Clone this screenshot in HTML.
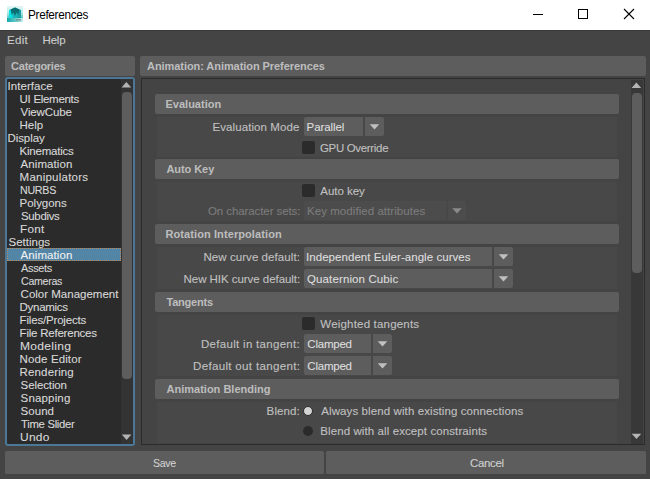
<!DOCTYPE html>
<html><head><meta charset="utf-8"><style>
*{box-sizing:border-box;margin:0;padding:0}
html,body{width:650px;height:479px;overflow:hidden;background:#444444;font-family:"Liberation Sans",sans-serif;font-size:11px;color:#bbbbbb}
.a{position:absolute}
.t{position:absolute;white-space:nowrap;-webkit-text-stroke:0.1px currentColor}
.b{-webkit-text-stroke:0}
</style></head><body>
<div class="a" style="left:0px;top:0px;width:650px;height:30px;background:#ffffff;"></div>
<div class="a" style="left:0px;top:30px;width:650px;height:1px;background:#3a3a3a;"></div>
<svg class="a" style="left:7px;top:6px" width="16" height="16" viewBox="0 0 16 16">
<defs><linearGradient id="ig" x1="0" y1="0" x2="0" y2="1"><stop offset="0" stop-color="#e4f6f6"/><stop offset="0.4" stop-color="#b8e9e9"/><stop offset="0.8" stop-color="#4ec4c4"/><stop offset="1" stop-color="#1fb0b0"/></linearGradient>
<linearGradient id="ib" x1="0" y1="0" x2="1" y2="0"><stop offset="0" stop-color="#13a9ab"/><stop offset="0.6" stop-color="#6ccccc"/><stop offset="1" stop-color="#c9eded"/></linearGradient></defs>
<rect x="0" y="0" width="16" height="16" fill="url(#ig)"/>
<rect x="0" y="12" width="16" height="4" fill="url(#ib)"/>
<path d="M2 12 L2 4.3 L8 1.6 L14 4.3 L14 12 Z" fill="#1db3b6"/>
<path d="M2 4.3 L5.2 3 L5.6 12 L2 12 Z" fill="#08e2e2"/>
<path d="M10.8 3 L14 4.3 L14 12 L10.6 12 Z" fill="#1a9ea2"/>
<path d="M3.6 3.6 L8 1.6 L12.4 3.6 L11.2 9 L9.6 6.2 L8 10 L6.4 6.2 L4.8 9 Z" fill="#0b6c72"/>
<rect x="9" y="13.2" width="5" height="1.3" fill="#6f8384" opacity="0.8"/>
</svg>
<div class="t b" style="left:27.60px;top:6.84px;font-size:12px;line-height:16px;font-weight:normal;letter-spacing:-0.300px;color:#000000;transform:scaleX(0.9787);transform-origin:0 0;">Preferences</div>
<div class="a" style="left:533px;top:14px;width:10px;height:1px;background:#000;"></div>
<div class="a" style="left:578px;top:9px;width:10px;height:10px;background:transparent;border:1px solid #000"></div>
<svg class="a" style="left:623px;top:8px" width="12" height="12" viewBox="0 0 12 12"><path d="M1 1 L11 11 M11 1 L1 11" stroke="#000" stroke-width="1.1"/></svg>
<div class="t" style="left:7.00px;top:32.52px;font-size:11.5px;line-height:15px;font-weight:normal;letter-spacing:0.300px;color:#cccccc;transform:scaleX(1.0050);transform-origin:0 0;">Edit</div>
<div class="t" style="left:42.50px;top:32.52px;font-size:11.5px;line-height:15px;font-weight:normal;letter-spacing:-0.167px;color:#cccccc;">Help</div>
<div class="a" style="left:5px;top:56px;width:130px;height:20px;background:#5d5d5d;border-radius:2px"></div>
<div class="t b" style="left:11.10px;top:59.19px;font-size:11px;line-height:14px;font-weight:bold;letter-spacing:-0.256px;color:#bdbdbd;">Categories</div>
<div class="a" style="left:140px;top:56px;width:506px;height:20px;background:#5d5d5d;border-radius:2px"></div>
<div class="t b" style="left:147.00px;top:59.19px;font-size:11px;line-height:14px;font-weight:bold;letter-spacing:-0.065px;color:#bdbdbd;">Animation: Animation Preferences</div>
<div class="a" style="left:5px;top:77px;width:130px;height:369px;background:#2b2b2b;border:2px solid #4b7896;border-radius:3px"></div>
<div class="t" style="left:7.50px;top:78.52px;font-size:11.5px;line-height:15px;font-weight:normal;letter-spacing:0.050px;color:#d8d8d8;">Interface</div>
<div class="t" style="left:19.60px;top:91.52px;font-size:11.5px;line-height:15px;font-weight:normal;letter-spacing:-0.300px;color:#d8d8d8;">UI Elements</div>
<div class="t" style="left:20.60px;top:104.52px;font-size:11.5px;line-height:15px;font-weight:normal;letter-spacing:-0.129px;color:#d8d8d8;">ViewCube</div>
<div class="t" style="left:19.60px;top:117.52px;font-size:11.5px;line-height:15px;font-weight:normal;letter-spacing:-0.033px;color:#d8d8d8;">Help</div>
<div class="t" style="left:7.50px;top:130.52px;font-size:11.5px;line-height:15px;font-weight:normal;letter-spacing:-0.083px;color:#d8d8d8;">Display</div>
<div class="t" style="left:19.60px;top:143.52px;font-size:11.5px;line-height:15px;font-weight:normal;letter-spacing:-0.233px;color:#d8d8d8;">Kinematics</div>
<div class="t" style="left:20.60px;top:156.52px;font-size:11.5px;line-height:15px;font-weight:normal;letter-spacing:0.075px;color:#d8d8d8;">Animation</div>
<div class="t" style="left:19.60px;top:169.52px;font-size:11.5px;line-height:15px;font-weight:normal;letter-spacing:0.236px;color:#d8d8d8;">Manipulators</div>
<div class="t" style="left:19.60px;top:182.52px;font-size:11.5px;line-height:15px;font-weight:normal;letter-spacing:-0.300px;color:#d8d8d8;transform:scaleX(0.9286);transform-origin:0 0;">NURBS</div>
<div class="t" style="left:19.60px;top:195.52px;font-size:11.5px;line-height:15px;font-weight:normal;letter-spacing:-0.029px;color:#d8d8d8;">Polygons</div>
<div class="t" style="left:20.60px;top:208.52px;font-size:11.5px;line-height:15px;font-weight:normal;letter-spacing:-0.300px;color:#d8d8d8;transform:scaleX(0.9923);transform-origin:0 0;">Subdivs</div>
<div class="t" style="left:19.60px;top:221.52px;font-size:11.5px;line-height:15px;font-weight:normal;letter-spacing:0.300px;color:#d8d8d8;transform:scaleX(1.0175);transform-origin:0 0;">Font</div>
<div class="t" style="left:8.50px;top:234.52px;font-size:11.5px;line-height:15px;font-weight:normal;letter-spacing:0.000px;color:#d8d8d8;">Settings</div>
<div class="a" style="left:7px;top:248px;width:114px;height:13px;background:#5285a6;outline:1px dotted #b8895c;outline-offset:-1px"></div>
<div class="t" style="left:20.60px;top:247.52px;font-size:11.5px;line-height:15px;font-weight:normal;letter-spacing:0.075px;color:#f0f0f0;">Animation</div>
<div class="t" style="left:20.60px;top:260.52px;font-size:11.5px;line-height:15px;font-weight:normal;letter-spacing:-0.300px;color:#d8d8d8;transform:scaleX(0.9477);transform-origin:0 0;">Assets</div>
<div class="t" style="left:20.60px;top:273.52px;font-size:11.5px;line-height:15px;font-weight:normal;letter-spacing:-0.300px;color:#d8d8d8;transform:scaleX(0.9226);transform-origin:0 0;">Cameras</div>
<div class="t" style="left:20.60px;top:286.52px;font-size:11.5px;line-height:15px;font-weight:normal;letter-spacing:0.000px;color:#d8d8d8;">Color Management</div>
<div class="t" style="left:19.60px;top:299.52px;font-size:11.5px;line-height:15px;font-weight:normal;letter-spacing:-0.300px;color:#d8d8d8;">Dynamics</div>
<div class="t" style="left:19.60px;top:312.52px;font-size:11.5px;line-height:15px;font-weight:normal;letter-spacing:-0.177px;color:#d8d8d8;">Files/Projects</div>
<div class="t" style="left:19.60px;top:325.52px;font-size:11.5px;line-height:15px;font-weight:normal;letter-spacing:-0.221px;color:#d8d8d8;">File References</div>
<div class="t" style="left:19.60px;top:338.52px;font-size:11.5px;line-height:15px;font-weight:normal;letter-spacing:0.300px;color:#d8d8d8;transform:scaleX(1.0467);transform-origin:0 0;">Modeling</div>
<div class="t" style="left:19.60px;top:351.52px;font-size:11.5px;line-height:15px;font-weight:normal;letter-spacing:0.120px;color:#d8d8d8;">Node Editor</div>
<div class="t" style="left:19.60px;top:364.52px;font-size:11.5px;line-height:15px;font-weight:normal;letter-spacing:0.138px;color:#d8d8d8;">Rendering</div>
<div class="t" style="left:20.60px;top:377.52px;font-size:11.5px;line-height:15px;font-weight:normal;letter-spacing:-0.112px;color:#d8d8d8;">Selection</div>
<div class="t" style="left:20.60px;top:390.52px;font-size:11.5px;line-height:15px;font-weight:normal;letter-spacing:0.157px;color:#d8d8d8;">Snapping</div>
<div class="t" style="left:20.60px;top:403.52px;font-size:11.5px;line-height:15px;font-weight:normal;letter-spacing:0.025px;color:#d8d8d8;">Sound</div>
<div class="t" style="left:20.60px;top:416.52px;font-size:11.5px;line-height:15px;font-weight:normal;letter-spacing:-0.300px;color:#d8d8d8;transform:scaleX(0.9836);transform-origin:0 0;">Time Slider</div>
<div class="t" style="left:19.60px;top:429.52px;font-size:11.5px;line-height:15px;font-weight:normal;letter-spacing:0.300px;color:#d8d8d8;transform:scaleX(1.0372);transform-origin:0 0;">Undo</div>
<div class="a" style="left:121px;top:79px;width:12px;height:365px;background:#333333;"></div>
<svg class="a" style="left:0;top:0;overflow:visible" width="1" height="1"><polygon transform="translate(121.6,82)" points="0,5.4 9.6,5.4 4.8,0" fill="#b4b4b4"/></svg>
<div class="a" style="left:122px;top:92px;width:10px;height:287px;background:#5d5d5d;border-radius:4px"></div>
<svg class="a" style="left:0;top:0;overflow:visible" width="1" height="1"><polygon transform="translate(121.8,434.5)" points="0,0 9.6,0 4.8,5.4" fill="#b4b4b4"/></svg>
<div class="a" style="left:141px;top:78px;width:504px;height:367px;background:#444444;border:1px solid #2b2b2b"></div>
<div class="a" style="left:155px;top:94px;width:464px;height:20px;background:#5d5d5d;border-radius:2px"></div>
<div class="t b" style="left:165.50px;top:97.19px;font-size:11px;line-height:14px;font-weight:bold;letter-spacing:0.000px;color:#bdbdbd;">Evaluation</div>
<div class="a" style="left:157px;top:117px;width:460px;height:40px;background:#484848;"></div>
<div class="t" style="left:212.50px;top:119.52px;font-size:11.5px;line-height:15px;font-weight:normal;letter-spacing:0.079px;color:#c0c0c0;">Evaluation Mode</div>
<div class="a" style="left:304px;top:117px;width:80px;height:19px;background:#5d5d5d;border-radius:2px"></div>
<div class="a" style="left:363px;top:117px;width:2px;height:19px;background:#484848;"></div>
<svg class="a" style="left:0;top:0;overflow:visible" width="1" height="1"><polygon transform="translate(369.75,124.2)" points="0,0 9.5,0 4.75,5.2" fill="#c0c0c0"/></svg>
<div class="t" style="left:306.60px;top:119.52px;font-size:11.5px;line-height:15px;font-weight:normal;letter-spacing:-0.100px;color:#dddddd;">Parallel</div>
<div class="a" style="left:302px;top:141px;width:13px;height:13px;background:#2b2b2b;border-radius:2px"></div>
<div class="t" style="left:320.30px;top:140.52px;font-size:11.5px;line-height:15px;font-weight:normal;letter-spacing:-0.300px;color:#c0c0c0;transform:scaleX(0.9942);transform-origin:0 0;">GPU Override</div>
<div class="a" style="left:155px;top:159px;width:464px;height:20px;background:#5d5d5d;border-radius:2px"></div>
<div class="t b" style="left:166.50px;top:162.19px;font-size:11px;line-height:14px;font-weight:bold;letter-spacing:-0.071px;color:#bdbdbd;">Auto Key</div>
<div class="a" style="left:157px;top:182px;width:460px;height:39px;background:#484848;"></div>
<div class="a" style="left:302px;top:184px;width:13px;height:13px;background:#2b2b2b;border-radius:2px"></div>
<div class="t" style="left:320.30px;top:183.52px;font-size:11.5px;line-height:15px;font-weight:normal;letter-spacing:-0.043px;color:#c0c0c0;">Auto key</div>
<div class="t" style="left:208.00px;top:203.52px;font-size:11.5px;line-height:15px;font-weight:normal;letter-spacing:-0.088px;color:#7c7c7c;">On character sets:</div>
<div class="a" style="left:304px;top:201px;width:162px;height:19px;background:#4c4c4c;border-radius:2px"></div>
<div class="a" style="left:446px;top:201px;width:2px;height:19px;background:#484848;"></div>
<svg class="a" style="left:0;top:0;overflow:visible" width="1" height="1"><polygon transform="translate(452.25,208.2)" points="0,0 9.5,0 4.75,5.2" fill="#8a8a8a"/></svg>
<div class="t" style="left:307.00px;top:203.52px;font-size:11.5px;line-height:15px;font-weight:normal;letter-spacing:0.055px;color:#7c7c7c;">Key modified attributes</div>
<div class="a" style="left:155px;top:224px;width:464px;height:20px;background:#5d5d5d;border-radius:2px"></div>
<div class="t b" style="left:165.50px;top:227.19px;font-size:11px;line-height:14px;font-weight:bold;letter-spacing:0.090px;color:#bdbdbd;">Rotation Interpolation</div>
<div class="a" style="left:157px;top:247px;width:460px;height:42px;background:#484848;"></div>
<div class="t" style="left:203.40px;top:249.52px;font-size:11.5px;line-height:15px;font-weight:normal;letter-spacing:0.071px;color:#c0c0c0;">New curve default:</div>
<div class="a" style="left:304px;top:247px;width:209px;height:19px;background:#5d5d5d;border-radius:2px"></div>
<div class="a" style="left:492px;top:247px;width:2px;height:19px;background:#484848;"></div>
<svg class="a" style="left:0;top:0;overflow:visible" width="1" height="1"><polygon transform="translate(498.75,254.2)" points="0,0 9.5,0 4.75,5.2" fill="#c0c0c0"/></svg>
<div class="t" style="left:306.00px;top:249.52px;font-size:11.5px;line-height:15px;font-weight:normal;letter-spacing:0.052px;color:#dddddd;">Independent Euler-angle curves</div>
<div class="t" style="left:183.60px;top:271.52px;font-size:11.5px;line-height:15px;font-weight:normal;letter-spacing:-0.048px;color:#c0c0c0;">New HIK curve default:</div>
<div class="a" style="left:304px;top:269px;width:209px;height:19px;background:#5d5d5d;border-radius:2px"></div>
<div class="a" style="left:492px;top:269px;width:2px;height:19px;background:#484848;"></div>
<svg class="a" style="left:0;top:0;overflow:visible" width="1" height="1"><polygon transform="translate(498.75,276.2)" points="0,0 9.5,0 4.75,5.2" fill="#c0c0c0"/></svg>
<div class="t" style="left:307.00px;top:271.52px;font-size:11.5px;line-height:15px;font-weight:normal;letter-spacing:0.120px;color:#dddddd;">Quaternion Cubic</div>
<div class="a" style="left:155px;top:292px;width:464px;height:20px;background:#5d5d5d;border-radius:2px"></div>
<div class="t b" style="left:166.50px;top:295.19px;font-size:11px;line-height:14px;font-weight:bold;letter-spacing:-0.214px;color:#bdbdbd;">Tangents</div>
<div class="a" style="left:157px;top:315px;width:460px;height:61px;background:#484848;"></div>
<div class="a" style="left:302px;top:317px;width:13px;height:13px;background:#2b2b2b;border-radius:2px"></div>
<div class="t" style="left:320.30px;top:316.52px;font-size:11.5px;line-height:15px;font-weight:normal;letter-spacing:0.194px;color:#c0c0c0;">Weighted tangents</div>
<div class="t" style="left:201.00px;top:336.52px;font-size:11.5px;line-height:15px;font-weight:normal;letter-spacing:0.300px;color:#c0c0c0;">Default in tangent:</div>
<div class="a" style="left:304px;top:334px;width:88px;height:19px;background:#5d5d5d;border-radius:2px"></div>
<div class="a" style="left:371px;top:334px;width:2px;height:19px;background:#484848;"></div>
<svg class="a" style="left:0;top:0;overflow:visible" width="1" height="1"><polygon transform="translate(377.75,341.2)" points="0,0 9.5,0 4.75,5.2" fill="#c0c0c0"/></svg>
<div class="t" style="left:307.30px;top:336.52px;font-size:11.5px;line-height:15px;font-weight:normal;letter-spacing:-0.217px;color:#dddddd;">Clamped</div>
<div class="t" style="left:193.00px;top:358.52px;font-size:11.5px;line-height:15px;font-weight:normal;letter-spacing:0.300px;color:#c0c0c0;transform:scaleX(1.0076);transform-origin:0 0;">Default out tangent:</div>
<div class="a" style="left:304px;top:356px;width:88px;height:19px;background:#5d5d5d;border-radius:2px"></div>
<div class="a" style="left:371px;top:356px;width:2px;height:19px;background:#484848;"></div>
<svg class="a" style="left:0;top:0;overflow:visible" width="1" height="1"><polygon transform="translate(377.75,363.2)" points="0,0 9.5,0 4.75,5.2" fill="#c0c0c0"/></svg>
<div class="t" style="left:307.30px;top:358.52px;font-size:11.5px;line-height:15px;font-weight:normal;letter-spacing:-0.217px;color:#dddddd;">Clamped</div>
<div class="a" style="left:155px;top:379px;width:464px;height:20px;background:#5d5d5d;border-radius:2px"></div>
<div class="t b" style="left:166.50px;top:382.19px;font-size:11px;line-height:14px;font-weight:bold;letter-spacing:0.006px;color:#bdbdbd;">Animation Blending</div>
<div class="a" style="left:157px;top:402px;width:460px;height:41px;background:#484848;"></div>
<div class="t" style="left:266.60px;top:403.52px;font-size:11.5px;line-height:15px;font-weight:normal;letter-spacing:0.120px;color:#c0c0c0;">Blend:</div>
<div class="a" style="left:303.3px;top:406.25px;width:10px;height:10px;background:#d4d4d4;border-radius:50%;border:1.2px solid #2b2b2b"></div>
<div class="t" style="left:321.25px;top:403.52px;font-size:11.5px;line-height:15px;font-weight:normal;letter-spacing:0.101px;color:#c0c0c0;">Always blend with existing connections</div>
<div class="a" style="left:303.3px;top:426.25px;width:10px;height:10px;background:#2b2b2b;border-radius:50%"></div>
<div class="t" style="left:320.25px;top:423.52px;font-size:11.5px;line-height:15px;font-weight:normal;letter-spacing:0.098px;color:#c0c0c0;">Blend with all except constraints</div>
<div class="a" style="left:631px;top:80px;width:12px;height:364px;background:#383838;"></div>
<svg class="a" style="left:0;top:0;overflow:visible" width="1" height="1"><polygon transform="translate(631.6,82.6)" points="0,5.5 9.6,5.5 4.8,0" fill="#b4b4b4"/></svg>
<div class="a" style="left:632px;top:93px;width:10px;height:180px;background:#5d5d5d;border-radius:4px"></div>
<svg class="a" style="left:0;top:0;overflow:visible" width="1" height="1"><polygon transform="translate(631.7,433.7)" points="0,0 9.6,0 4.8,5.4" fill="#b4b4b4"/></svg>
<div class="a" style="left:5px;top:451px;width:319px;height:23px;background:#5d5d5d;border-radius:1.5px"></div>
<div class="t" style="left:153.20px;top:455.52px;font-size:11.5px;line-height:15px;font-weight:normal;letter-spacing:-0.300px;color:#d0d0d0;transform:scaleX(0.9163);transform-origin:0 0;">Save</div>
<div class="a" style="left:326px;top:451px;width:320px;height:23px;background:#5d5d5d;border-radius:1.5px"></div>
<div class="t" style="left:469.50px;top:455.52px;font-size:11.5px;line-height:15px;font-weight:normal;letter-spacing:-0.300px;color:#d0d0d0;transform:scaleX(0.9940);transform-origin:0 0;">Cancel</div>
</body></html>
